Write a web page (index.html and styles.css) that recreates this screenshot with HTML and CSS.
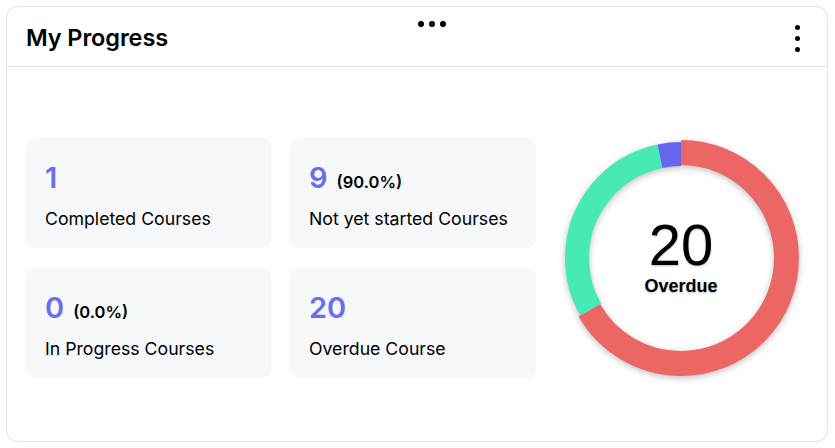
FILE: index.html
```html
<!DOCTYPE html>
<html lang="en">
<head>
    <meta charset="UTF-8">
    <title>My Progress</title>
    <link rel="stylesheet" href="styles.css">
</head>
<body>
    <div class="widget">
        <div class="widget-header">
            <h2 class="widget-title">My Progress</h2>
            <div class="drag-handle"><span></span><span></span><span></span></div>
            <button class="menu-button"><span></span><span></span><span></span></button>
        </div>
        <div class="widget-body">
            <div class="stats">
                <div class="stat-card">
                    <div class="stat-value"><span class="stat-number">1</span></div>
                    <div class="stat-label">Completed Courses</div>
                </div>
                <div class="stat-card">
                    <div class="stat-value"><span class="stat-number">9</span><span class="stat-percent">(90.0%)</span></div>
                    <div class="stat-label">Not yet started Courses</div>
                </div>
                <div class="stat-card">
                    <div class="stat-value"><span class="stat-number">0</span><span class="stat-percent">(0.0%)</span></div>
                    <div class="stat-label">In Progress Courses</div>
                </div>
                <div class="stat-card">
                    <div class="stat-value"><span class="stat-number">20</span></div>
                    <div class="stat-label">Overdue Course</div>
                </div>
            </div>
            <div class="chart">
                <svg class="donut" viewBox="0 0 240 240">
                    <!-- circumference for r=104: 653.45 -->
                    <circle cx="120" cy="120" r="104" fill="none" stroke="#47e9b4" stroke-width="24"
                        stroke-dasharray="196.04 653.45" stroke-dashoffset="-435.63" transform="rotate(-90 120 120)"></circle>
                    <circle cx="120" cy="120" r="104" fill="none" stroke="#6767ee" stroke-width="24"
                        stroke-dasharray="21.78 653.45" stroke-dashoffset="-631.67" transform="rotate(-90 120 120)"></circle>
                    <!-- red segment is a bit larger (hovered) -->
                    <circle cx="120" cy="120" r="105.5" fill="none" stroke="#ec6666" stroke-width="25"
                        stroke-dasharray="441.9 662.9" transform="rotate(-90 120 120)"></circle>
                </svg>
                <div class="chart-center">
                    <div class="chart-total">20</div>
                    <div class="chart-caption">Overdue</div>
                </div>
            </div>
        </div>
    </div>
</body>
</html>
```

FILE: styles.css
```css
* {
    margin: 0;
    padding: 0;
    box-sizing: border-box;
}

body {
    padding: 6px 7px 6px 6px;
    background: #ffffff;
    font-family: Inter, "Noto Sans", sans-serif;
    color: #111111;
}

.widget {
    height: 436px;
    border: 1px solid #dce2e8;
    border-radius: 12px;
    background: #ffffff;
    display: flex;
    flex-direction: column;
}

.widget-header {
    position: relative;
    height: 60px;
    display: flex;
    align-items: center;
    justify-content: space-between;
    padding: 0 27px 0 19px;
    border-bottom: 1px solid #dce2e8;
}

.widget-title {
    font-size: 23.5px;
    font-weight: 600;
    color: #000000;
    letter-spacing: -0.1px;
    margin-top: 1px;
}

.drag-handle {
    position: absolute;
    left: 411px;
    top: 14px;
    display: flex;
    gap: 5px;
}

.drag-handle span {
    width: 6px;
    height: 6px;
    border-radius: 50%;
    background: #000000;
}

.menu-button span {
    width: 5px;
    height: 5px;
    border-radius: 50%;
    background: #000000;
}

.menu-button {
    border: none;
    background: none;
    display: flex;
    flex-direction: column;
    gap: 6px;
    margin-top: 4px;
    cursor: pointer;
}

.widget-body {
    flex: 1;
    display: flex;
    align-items: center;
    padding: 0 27px 0 19px;
    margin-top: 7px;
}

.stats {
    display: grid;
    grid-template-columns: 245px 246px;
    grid-auto-rows: 110px;
    gap: 20px 19px;
}

.stat-card {
    background: #f7f8fa;
    border-radius: 9px;
    padding: 22px 19px 0;
}

.stat-value {
    display: flex;
    align-items: baseline;
    gap: 9px;
    height: 36px;
}

.stat-number {
    font-size: 29px;
    font-weight: 600;
    color: #6c6cef;
}

.stat-percent {
    font-size: 16.5px;
    font-weight: 600;
    color: #000000;
}

.stat-label {
    margin-top: 12px;
    font-size: 17.7px;
    color: #000000;
}

.chart {
    position: relative;
    width: 240px;
    height: 240px;
    margin-left: auto;
    margin-right: -1px;
}

.donut {
    width: 240px;
    height: 240px;
    filter: drop-shadow(0 2px 3px rgba(0, 0, 0, 0.25));
}

.chart-center {
    position: absolute;
    inset: 0;
    display: flex;
    flex-direction: column;
    align-items: center;
    justify-content: center;
    font-family: "Liberation Sans", Arial, sans-serif;
    color: #000000;
    text-shadow: 0 1px 2px rgba(0, 0, 0, 0.25);
}

.chart-total {
    font-size: 58px;
    line-height: 58px;
    margin-top: -2px;
}

.chart-caption {
    font-size: 18px;
    font-weight: bold;
    margin-top: 2px;
}
```
